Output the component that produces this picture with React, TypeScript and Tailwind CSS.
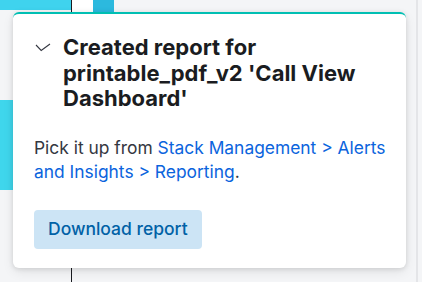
export default function App() {
  return (
    <div className="relative h-[282px] w-[422px] overflow-hidden bg-[#f4f5f7] pl-[13px] pt-[12px] font-['Inter',sans-serif]">
      {/* background app peeking around the toast */}
      <div className="absolute inset-0 flex">
        <div className="flex w-[71px] flex-col">
          <div className="h-[10px] bg-[#3fd3ee]" />
          <div className="mt-[90px] h-[90px] w-[13px] bg-[#3fd6ec]" />
        </div>
        <div className="w-px bg-[#1a1c21]" />
        <div className="h-[12px] w-[21px] bg-white" />
        <div className="h-[12px] w-[21px] bg-[#2cb9de]" />
        <div className="flex-1" />
        <div className="mr-[4px] w-[2px] bg-[#e4e5e8]" />
      </div>

      {/* toast */}
      <div className="relative flex w-[393px] flex-col items-start rounded-[6px] border-t-2 border-[#00bfb3] bg-white pb-[19px] pl-[21px] pr-[12px] pt-[21px] shadow-[0_1px_5px_rgba(0,0,0,0.12),0_4px_12px_rgba(0,0,0,0.08)]">
        <div className="flex items-start gap-[12px]">
          <svg width="16" height="16" viewBox="0 0 16 16" className="ml-[1px] mt-[5px] shrink-0" fill="none">
            <path d="M1 5 L6.2 10.5 L15 4" stroke="#343741" strokeWidth="1.1" />
          </svg>
          <h2 className="text-[22px] font-bold leading-[25.5px] text-[#1a1c21]">
            Created report for printable_pdf_v2 'Call View Dashboard'
          </h2>
        </div>
        <p className="mt-[24px] text-[17.4px] leading-[24px] text-[#343741]">
          Pick it up from <a className="text-[#0b64dd]">Stack Management &gt; Alerts and Insights &gt; Reporting</a>.
        </p>
        <button className="mt-[26px] h-[39px] rounded-[4px] bg-[#cce4f5] px-[14px] text-[17.5px] font-medium text-[#0061a6]">
          Download report
        </button>
      </div>
    </div>
  );
}
